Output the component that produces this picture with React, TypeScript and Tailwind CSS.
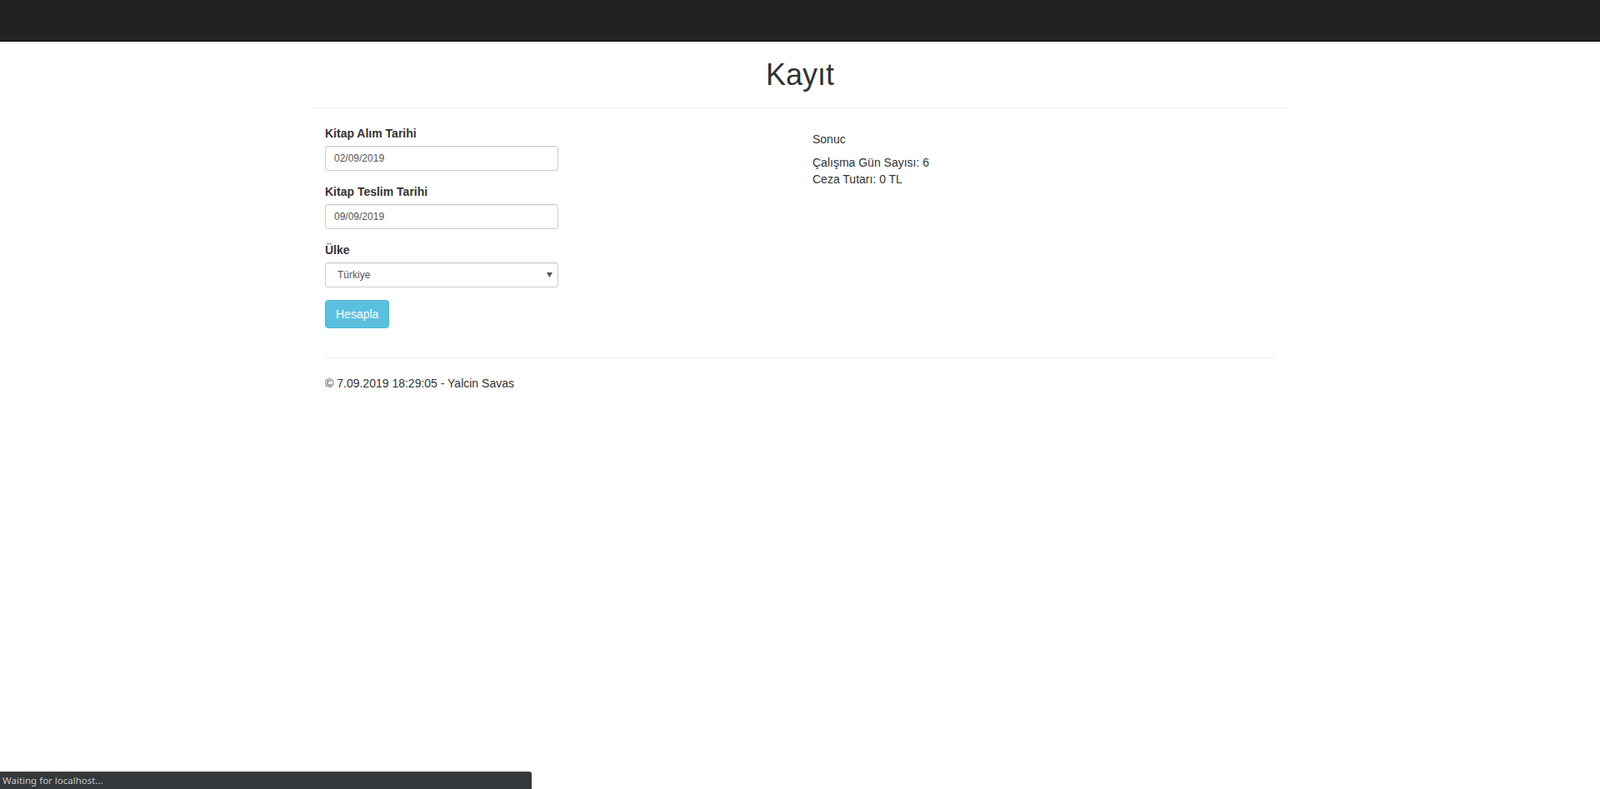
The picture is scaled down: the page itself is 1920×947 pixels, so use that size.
import React from 'react';

const labelCls = 'block text-[14px] leading-[20px] font-bold text-[#333] mb-[5px]';
const inputCls =
  'block w-full max-w-[280px] h-[30px] px-[10px] text-[12px] leading-[1.5] text-[#555] bg-white border border-[#ccc] rounded-[3px] shadow-[inset_0_1px_1px_rgba(0,0,0,0.075)] outline-none';

const App: React.FC = () => {
  return (
    <div className="min-h-screen bg-white text-[#333] font-['Liberation_Sans',Arial,sans-serif] text-[14px] leading-[20px]">
      <nav className="h-[50px] bg-[#222] border-b border-[#080808]" />

      <div className="w-[1170px] mx-auto">
        <h1 className="mt-[20px] text-center text-[36px] leading-[40px] font-normal text-[#333]">Kayıt</h1>
        <hr className="mt-[19px] mb-[20px] border-0 border-t border-[#eee]" />

        <div className="flex">
          <div className="w-[585px] px-[15px]">
            <div className="mb-[15px]">
              <label className={labelCls}>Kitap Alım Tarihi</label>
              <input className={inputCls} defaultValue="02/09/2019" />
            </div>
            <div className="mb-[15px]">
              <label className={labelCls}>Kitap Teslim Tarihi</label>
              <input className={inputCls} defaultValue="09/09/2019" />
            </div>
            <div className="mb-[15px]">
              <label className={labelCls}>Ülke</label>
              <div className="relative max-w-[280px]">
                <select className={inputCls + ' appearance-none pl-[14px]'} defaultValue="tr">
                  <option value="tr">Türkiye</option>
                </select>
                <svg className="absolute right-[7px] top-[12px] pointer-events-none" width="7" height="6" viewBox="0 0 7 6">
                  <path d="M0 0H7L3.5 6Z" fill="#555" />
                </svg>
              </div>
            </div>
            <div className="mb-[15px]">
              <button className="h-[34px] px-[12px] text-[14px] leading-[20px] text-white bg-[#5bc0de] border border-[#46b8da] rounded-[4px]">
                Hesapla
              </button>
            </div>
          </div>

          <div className="w-[585px] px-[15px] pt-[7px]">
            <div className="mb-[8px]">Sonuc</div>
            <div>Çalışma Gün Sayısı: 6</div>
            <div>Ceza Tutarı: 0 TL</div>
          </div>
        </div>

        <footer className="px-[15px]">
          <hr className="mt-[20px] border-0 border-t border-[#eee]" />
          <p className="mt-[20px]">© 7.09.2019 18:29:05 - Yalcin Savas</p>
        </footer>
      </div>

      <div className="fixed left-0 bottom-0 w-[638px] h-[21px] pl-[3px] bg-[#35383b] border-t border-[#4a4d50] rounded-tr-[3px] text-[11.5px] leading-[20px] text-[#c8c8c8] font-['Noto_Sans',sans-serif]">
        Waiting for localhost...
      </div>
    </div>
  );
};

export default App;
